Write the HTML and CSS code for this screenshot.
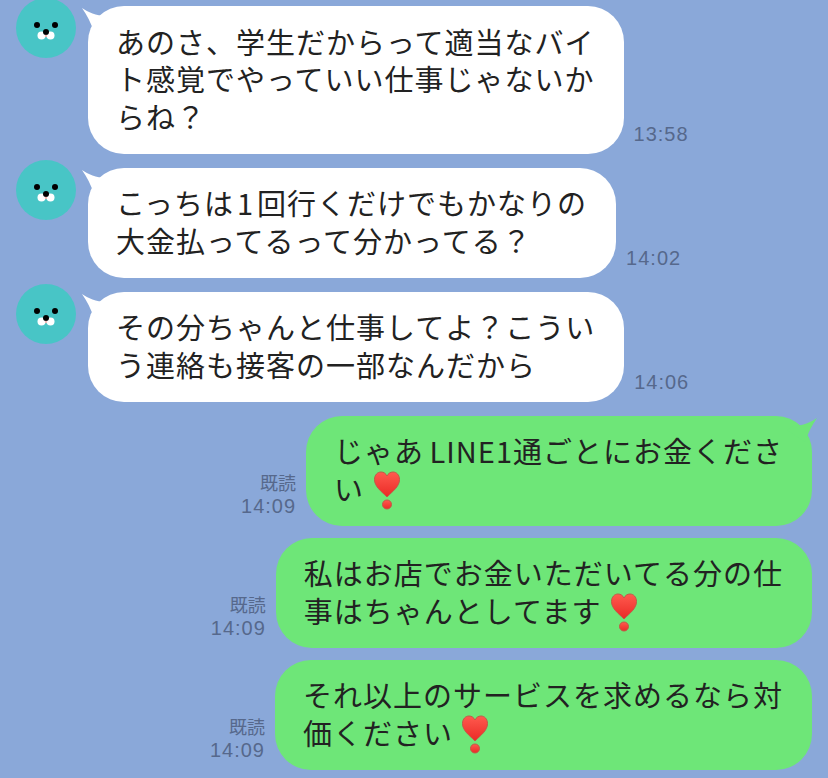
FILE: index.html
```html
<!DOCTYPE html>
<html lang="ja">
<head>
    <title>トーク</title>
    <meta http-equiv="Content-Type" content="text/html; charset=utf-8"/>
    <link rel="stylesheet" href="styles.css">
</head>
<body>
<svg class="defs" width="0" height="0">
    <defs>
        <linearGradient id="heartFill" x1="0" y1="0" x2="0" y2="1">
            <stop offset="0" stop-color="#ff5a4e"/>
            <stop offset="1" stop-color="#ea2a26"/>
        </linearGradient>
    </defs>
    <symbol id="face" viewBox="0 0 60 60">
        <circle cx="30" cy="30" r="30" fill="#48c5c6"/>
        <circle cx="21" cy="27" r="3" fill="#000"/>
        <circle cx="39" cy="27" r="3" fill="#000"/>
        <ellipse cx="25.500" cy="37.500" rx="4" ry="4" fill="#fff"/>
        <ellipse cx="34.500" cy="37.500" rx="4" ry="4" fill="#fff"/>
        <circle cx="30" cy="34" r="3" fill="#000"/>
        <circle cx="30" cy="38" r="1.200" fill="#f3b9b4"/>
    </symbol>
    <symbol id="heart" viewBox="0 0 28 40">
        <path d="M14 26C8 20 1.500 15.500 1.500 8.500 1.500 4 4.500 1 8 1c2.700 0 4.800 1.500 6 4 1.200-2.500 3.300-4 6-4 3.500 0 6.500 3 6.500 7.500 0 7-6.500 11.500-12.500 17.500z" fill="url(#heartFill)" stroke="#c05a48" stroke-width="1"/>
        <circle cx="14" cy="33.500" r="4.500" fill="url(#heartFill)" stroke="#c05a48" stroke-width="1"/>
    </symbol>
</svg>
<div class="talk">
    <div class="row">
        <svg class="avatar"><use href="#face"/></svg>
        <div class="bubble white">
            <svg class="tail" viewBox="0 0 30 24"><path d="M0 0C6 4 14 8 24 8L30 12 12 24C9 15 5 7 0 0z"/></svg>
            あのさ、学生だからって適当なバイ<br>ト感覚でやっていい仕事じゃないか<br>らね？
        </div>
        <div class="meta"><span class="time">13:58</span></div>
    </div>
    <div class="row">
        <svg class="avatar"><use href="#face"/></svg>
        <div class="bubble white">
            <svg class="tail" viewBox="0 0 30 24"><path d="M0 0C6 4 14 8 24 8L30 12 12 24C9 15 5 7 0 0z"/></svg>
            こっちは<span class="digit">1</span>回行くだけでもかなりの<br>大金払ってるって分かってる？
        </div>
        <div class="meta"><span class="time">14:02</span></div>
    </div>
    <div class="row">
        <svg class="avatar"><use href="#face"/></svg>
        <div class="bubble white">
            <svg class="tail" viewBox="0 0 30 24"><path d="M0 0C6 4 14 8 24 8L30 12 12 24C9 15 5 7 0 0z"/></svg>
            その分ちゃんと仕事してよ？こうい<br>う連絡も接客の一部なんだから
        </div>
        <div class="meta"><span class="time">14:06</span></div>
    </div>
    <div class="row mine">
        <div class="meta"><span class="read">既読</span><span class="time">14:09</span></div>
        <div class="bubble green">
            <svg class="tail" viewBox="0 0 30 24"><path d="M30 0C24 4 16 8 6 8L0 12 18 24C21 15 25 7 30 0z"/></svg>
            じゃあ <span class="line-name">LINE1</span>通ごとにお金くださ<br>い <svg class="emoji"><use href="#heart"/></svg>
        </div>
    </div>
    <div class="row mine">
        <div class="meta"><span class="read">既読</span><span class="time">14:09</span></div>
        <div class="bubble green">
            私はお店でお金いただいてる分の仕<br>事はちゃんとしてます <svg class="emoji"><use href="#heart"/></svg>
        </div>
    </div>
    <div class="row mine">
        <div class="meta"><span class="read">既読</span><span class="time">14:09</span></div>
        <div class="bubble green">
            それ以上のサービスを求めるなら対<br>価ください <svg class="emoji"><use href="#heart"/></svg>
        </div>
    </div>
</div>
</body>
</html>
```

FILE: styles.css
```css
body {
    margin: 0;
    height: 778px;
    overflow: hidden;
    background-color: #8aa8d9;
    font-family: "Noto Sans CJK JP", "Liberation Sans", sans-serif;
}

.defs {
    position: absolute;
}

.talk {
    display: flex;
    flex-direction: column;
    gap: 14px;
    padding: 6px 16px 0;
}

.row {
    display: flex;
    align-items: flex-start;
}

.mine {
    justify-content: flex-end;
}

.mine + .mine {
    margin-top: -2px;
}

.avatar {
    width: 60px;
    height: 60px;
    margin: -8px 12px 0 0;
    flex: none;
}

.bubble {
    position: relative;
    padding: 16.500px 29px 18.500px 28px;
    border-radius: 36px;
    font-size: 29px;
    line-height: 37.500px;
    letter-spacing: 1px;
    color: #222;
    white-space: nowrap;
}

.digit {
    padding: 0 3px;
}

.line-name {
    margin-left: -2px;
}

.white {
    background-color: #fff;
}

.green {
    background-color: #6ee678;
}

.tail {
    position: absolute;
    top: 2px;
    width: 30px;
    height: 24px;
}

.white .tail {
    left: -6px;
    fill: #fff;
}

.green .tail {
    right: -5px;
    fill: #6ee678;
}

.emoji {
    width: 28px;
    height: 40px;
    margin: 0 0 -5px 1px;
    vertical-align: -5px;
}

.meta {
    display: flex;
    flex-direction: column;
    align-items: flex-end;
    align-self: flex-end;
    margin: 0 10px 8px;
    color: #56688c;
    line-height: 24px;
}

.time {
    font-family: "Liberation Sans", sans-serif;
    font-size: 20px;
    letter-spacing: 1px;
}

.read {
    font-size: 18px;
}

.mine .meta {
    margin: 0 10px 8px 0;
}
```
